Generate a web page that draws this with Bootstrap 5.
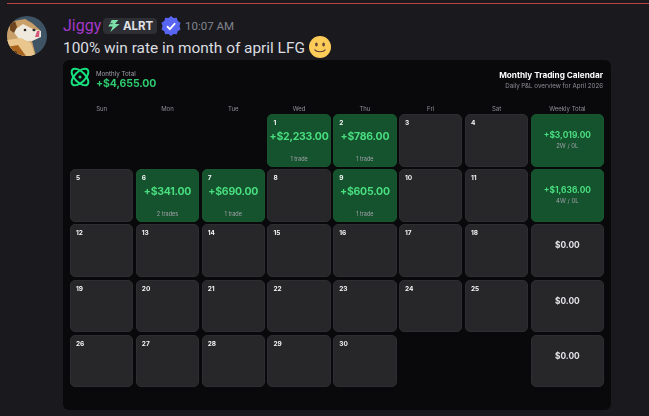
<!DOCTYPE html>
<html lang="en"><head><meta charset="utf-8"><title>Monthly Trading Calendar</title>
<link href="https://cdn.jsdelivr.net/npm/bootstrap@5.3.0/dist/css/bootstrap.min.css" rel="stylesheet">
<style>
html,body{margin:0;height:416px;overflow:hidden;background:#1a1a1e}
body{font-family:"Roboto","Liberation Sans",sans-serif;color:#dcdde0}
.topline{height:1px;margin:3px 0 0 7px;background:#b8444a}
.msg{padding:12px 38px 0 7px;gap:16px}
.avatar{width:40px;height:40px;flex:none;display:block}
.msgbody{flex:1;min-width:0}
.nameline{height:20px;font-size:16px;line-height:20px;gap:4px}
.uname{color:#a338c9;width:36px}
.tagpill{background:#2e2f35;border-radius:4px;height:16px;width:54px;padding:0 4px;gap:2px;font-family:"Inter",sans-serif;font-size:11.5px;font-weight:700;color:#e0e1e5;letter-spacing:-.1px}
.stamp{font-size:11.5px;color:#80848e}
.msgtext{height:24px;font-size:15.4px;line-height:24px;gap:4px}
.smile{margin-top:-2px}
.panel{background:#09090b;border-radius:6px;height:350px;padding:6px 7px 0;font-family:"Inter",sans-serif;filter:blur(.3px)}
.phead{height:32.5px}
.logowrap{gap:6px}
.logoicon{margin-top:1px}
.phright{margin-right:1px}
.plabel{font-size:6.2px;line-height:8px;color:#a1a1aa}
.ptotal{font-size:10.5px;line-height:11px;font-weight:700;color:#2ecc71;letter-spacing:-.1px}
.ptitle{font-size:8.2px;line-height:11px;font-weight:700;color:#fff}
.psub{font-size:6.2px;line-height:9px;color:#8f8f98}
.calgrid{display:grid;grid-template-columns:repeat(7,minmax(0,1fr)) 73.3px;grid-template-rows:13px repeat(5,52.7px);gap:2.5px 2.55px}
.dow{font-size:6px;line-height:8px;color:#8f8f98;text-align:center;align-self:start;padding-top:6px}
.cell{background:#27272a;border:1px solid #2e2e32;border-radius:5px;padding:4px 5px 3px;display:flex;flex-direction:column;min-width:0}
.cell.win{background:#14532d;border-color:#17562f}
.daynum{font-size:6.5px;line-height:8px;font-weight:700;color:#f4f4f5}
.amt{font-size:10.5px;line-height:13px;font-weight:700;color:#4ade80;text-align:center;white-space:nowrap;margin:3px -4px 0;letter-spacing:-.25px}
.trades{font-size:5.5px;line-height:7px;color:#a1a1aa;text-align:center;margin-top:auto}
.cell.wk{align-items:center;padding-top:15px}
.wkamt{font-size:8.4px;line-height:11px;font-weight:700;color:#4ade80}
.wkamt.zero{color:#e4e4e7}
.wksub{font-size:6px;line-height:8px;color:#a1a1aa;margin-top:1px}
</style></head><body>
<div class="topline"></div>
<div class="msg d-flex">
<svg class="avatar" viewBox="0 0 40 40"><defs><clipPath id="av"><circle cx="20" cy="20" r="20"/></clipPath></defs><g clip-path="url(#av)"><rect width="40" height="40" fill="#3e5364"/><path d="M0 12 7 5 18 3 25 7 33 14 34 20 25 25 29 40H0Z" fill="#c9a06a"/><path d="M6 15 16 8 26 13 34 15 34 21 25 25 14 26Z" fill="#efe8dc"/><path d="M0 24 14 22 24 27 28 40H0Z" fill="#e8c68e"/><path d="M0 31 11 29 19 40H0Z" fill="#a8641f"/><path d="M0 36 9 35 12 40H0Z" fill="#4d3420"/><path d="M3 8 8 5 10 11 7 17 3 14Z" fill="#6e4520"/><circle cx="18" cy="14" r="1.3" fill="#2a2220"/><ellipse cx="27" cy="14" rx="1.6" ry="1.2" fill="#33282a"/><path d="M28 21 30 15 32.5 15 32 21Z" fill="#d8587c"/></g></svg>
<div class="msgbody">
<div class="nameline d-flex align-items-center"><span class="uname">Jiggy</span>
<span class="tagpill d-inline-flex align-items-center"><svg width="15" height="14" viewBox="0 0 15 14"><path d="M12 .5 5 .5 1.5 7.5H6L3.5 13.5 13.5 5H8.5Z" fill="#7ce0a8"/><path d="M1 4.5H6M1 9.5H4.5" stroke="#2e2f35" stroke-width=".8"/></svg>ALRT</span>
<svg width="20" height="20" viewBox="0 0 16 16"><path d="M8 0 10 1.6 12.6 1.4 13.4 3.9 15.6 5.3 14.8 8 15.6 10.7 13.4 12.1 12.6 14.6 10 14.4 8 16 6 14.4 3.4 14.6 2.6 12.1.4 10.7 1.2 8 .4 5.3 2.6 3.9 3.4 1.4 6 1.6Z" fill="#5865f2"/><path d="M4.8 8.2 7.1 10.5 11.3 5.8" fill="none" stroke="#fff" stroke-width="1.5"/></svg>
<span class="stamp">10:07 AM</span></div>
<div class="msgtext d-flex align-items-center"><span>100% win rate in month of april LFG</span>
<svg class="smile" width="22" height="22" viewBox="0 0 22 22"><circle cx="11" cy="11" r="11" fill="#fdcb58"/><ellipse cx="7.4" cy="8.5" rx="1.3" ry="2" fill="#5d4037"/><ellipse cx="14.6" cy="8.5" rx="1.3" ry="2" fill="#5d4037"/><path d="M5.5 13.5C7.5 16.5 14.5 16.5 16.5 13.5" fill="none" stroke="#5d4037" stroke-width="1.2"/></svg></div>
<div class="panel">
<div class="phead d-flex justify-content-between">
<div class="d-flex logowrap"><svg class="logoicon" width="20" height="20" viewBox="0 0 20 20" fill="none" stroke="#17e27f" stroke-width="2"><ellipse cx="10" cy="10" rx="10.5" ry="5.3" transform="rotate(45 10 10)"/><ellipse cx="10" cy="10" rx="10.5" ry="5.3" transform="rotate(-45 10 10)"/><circle cx="10" cy="10" r="1.5" fill="#17e27f" stroke="none"/></svg>
<div class="pt-1"><div class="plabel">Monthly Total</div><div class="ptotal">+$4,655.00</div></div></div>
<div class="text-end pt-1 phright"><div class="ptitle">Monthly Trading Calendar</div><div class="psub">Daily P&amp;L overview for April 2026</div></div>
</div>
<div class="calgrid">
<div class="dow">Sun</div><div class="dow">Mon</div><div class="dow">Tue</div><div class="dow">Wed</div><div class="dow">Thu</div><div class="dow">Fri</div><div class="dow">Sat</div><div class="dow">Weekly Total</div>
<div></div><div></div><div></div>
<div class="cell win"><div class="daynum">1</div><div class="amt">+$2,233.00</div><div class="trades">1 trade</div></div>
<div class="cell win"><div class="daynum">2</div><div class="amt">+$786.00</div><div class="trades">1 trade</div></div>
<div class="cell"><div class="daynum">3</div></div><div class="cell"><div class="daynum">4</div></div>
<div class="cell win wk"><div class="wkamt">+$3,019.00</div><div class="wksub">2W / 0L</div></div>
<div class="cell"><div class="daynum">5</div></div>
<div class="cell win"><div class="daynum">6</div><div class="amt">+$341.00</div><div class="trades">2 trades</div></div>
<div class="cell win"><div class="daynum">7</div><div class="amt">+$690.00</div><div class="trades">1 trade</div></div>
<div class="cell"><div class="daynum">8</div></div>
<div class="cell win"><div class="daynum">9</div><div class="amt">+$605.00</div><div class="trades">1 trade</div></div>
<div class="cell"><div class="daynum">10</div></div><div class="cell"><div class="daynum">11</div></div>
<div class="cell win wk"><div class="wkamt">+$1,636.00</div><div class="wksub">4W / 0L</div></div>
<div class="cell"><div class="daynum">12</div></div><div class="cell"><div class="daynum">13</div></div><div class="cell"><div class="daynum">14</div></div><div class="cell"><div class="daynum">15</div></div><div class="cell"><div class="daynum">16</div></div><div class="cell"><div class="daynum">17</div></div><div class="cell"><div class="daynum">18</div></div>
<div class="cell wk"><div class="wkamt zero">$0.00</div></div>
<div class="cell"><div class="daynum">19</div></div><div class="cell"><div class="daynum">20</div></div><div class="cell"><div class="daynum">21</div></div><div class="cell"><div class="daynum">22</div></div><div class="cell"><div class="daynum">23</div></div><div class="cell"><div class="daynum">24</div></div><div class="cell"><div class="daynum">25</div></div>
<div class="cell wk"><div class="wkamt zero">$0.00</div></div>
<div class="cell"><div class="daynum">26</div></div><div class="cell"><div class="daynum">27</div></div><div class="cell"><div class="daynum">28</div></div><div class="cell"><div class="daynum">29</div></div><div class="cell"><div class="daynum">30</div></div><div></div><div></div>
<div class="cell wk"><div class="wkamt zero">$0.00</div></div>
</div></div></div></div>
<script src="https://cdn.jsdelivr.net/npm/bootstrap@5.3.0/dist/js/bootstrap.bundle.min.js"></script>
</body></html>
